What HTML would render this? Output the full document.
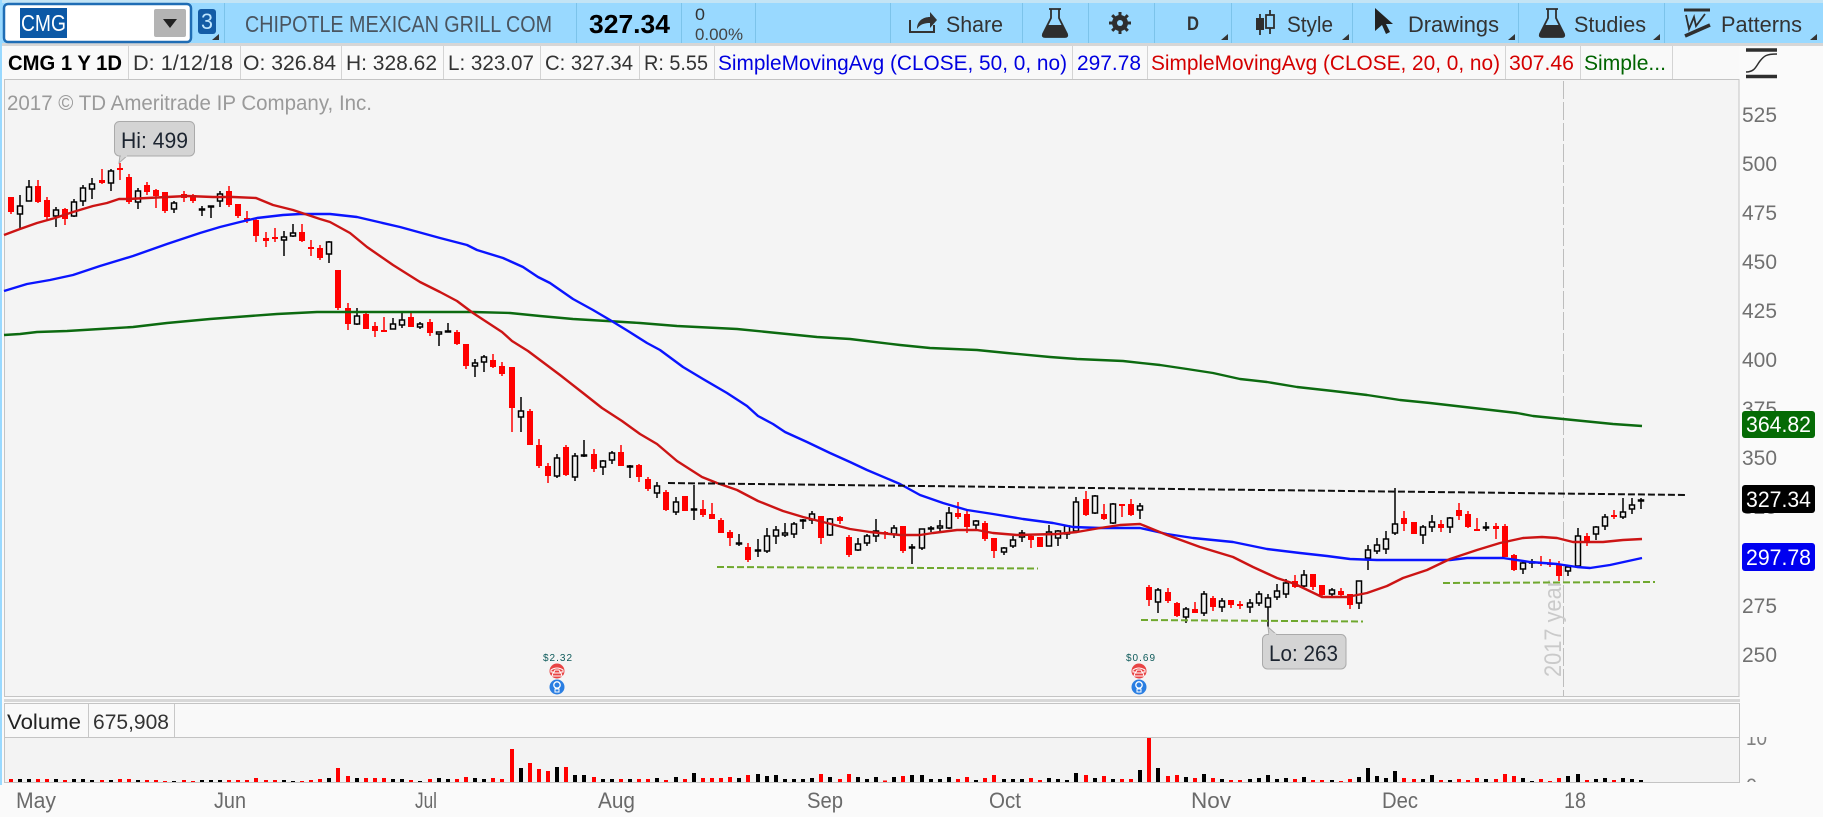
<!DOCTYPE html>
<html><head><meta charset="utf-8"><title>CMG chart</title>
<style>
html,body{margin:0;padding:0;background:#fafafa;width:1823px;height:817px;overflow:hidden}
svg{display:block}
text{font-family:"Liberation Sans",sans-serif}
</style></head><body>
<svg xmlns="http://www.w3.org/2000/svg" width="1823" height="817" viewBox="0 0 1823 817">
<defs><clipPath id="vc"><rect x="1741" y="737" width="60" height="45"/></clipPath></defs>
<rect width="1823" height="817" fill="#fafafa"/>
<!-- toolbar -->
<rect x="0" y="0" width="1823" height="3" fill="#c3e4f5"/>
<rect x="0" y="3" width="1823" height="40" fill="#99d9ff"/>
<rect x="0" y="43" width="1823" height="3" fill="#d6d6d6"/>
<rect x="0" y="0" width="2" height="785" fill="#99d9ff"/>
<path d="M224.5 3V43M576.5 3V43M681.5 3V43M755.5 3V43M890.5 3V43M1022.5 3V43M1088.5 3V43M1154.5 3V43M1231.5 3V43M1352.5 3V43M1518.5 3V43M1664.5 3V43" stroke="#7cc3ea" stroke-width="1"/>
<rect x="4" y="4" width="187" height="38" rx="4" fill="#fff" stroke="#1f6db5" stroke-width="2.5"/>
<rect x="20" y="8" width="47" height="30" fill="#0b58a6"/>
<text x="21" y="31" font-size="23" fill="#fff" textLength="45" lengthAdjust="spacingAndGlyphs">CMG</text>
<rect x="154" y="9" width="32" height="28" rx="2" fill="#b4b4b4"/>
<path d="M163 19h14l-7 9z" fill="#222"/>
<rect x="198" y="9" width="18" height="25" rx="3" fill="#145ca6"/>
<text x="201" y="29" font-size="22" fill="#bfe6ff" textLength="12" lengthAdjust="spacingAndGlyphs">3</text>
<path d="M219 34v6h-7z" fill="#333"/>
<text x="245" y="32" font-size="23" fill="#4a5560" textLength="307" lengthAdjust="spacingAndGlyphs">CHIPOTLE MEXICAN GRILL COM</text>
<text x="589" y="33" font-size="26" font-weight="700" fill="#000" textLength="81" lengthAdjust="spacingAndGlyphs">327.34</text>
<text x="695" y="20" font-size="17" fill="#333" textLength="10" lengthAdjust="spacingAndGlyphs">0</text>
<text x="695" y="40" font-size="17" fill="#444" textLength="48" lengthAdjust="spacingAndGlyphs">0.00%</text>
<!-- share -->
<path d="M910 20v12h24v-7" fill="none" stroke="#333" stroke-width="2"/>
<path d="M917 29c0-8 6-12 13-12v-5l7 8-7 8v-5c-5 0-10 1-13 6z" fill="#333"/>
<text x="946" y="32" font-size="22" fill="#333" textLength="57" lengthAdjust="spacingAndGlyphs">Share</text>
<!-- flask 1 -->
<path d="M1049 9h12M1051 9v9l-8 16q-1 3 2 3h20q3 0 2-3l-8-16v-9" fill="none" stroke="#2e2e2e" stroke-width="1.8"/>
<path d="M1047 25h16l4 9q1 3-2 3h-20q-3 0-2-3z" fill="#2e2e2e"/>
<!-- gear -->
<circle cx="1120" cy="23" r="6" fill="none" stroke="#2e2e2e" stroke-width="4"/>
<path d="M1120 12v22M1109 23h22M1112.2 15.2l15.600 15.600M1127.800 15.200l-15.600 15.600" stroke="#2e2e2e" stroke-width="3"/>
<circle cx="1120" cy="23" r="3" fill="#99d9ff"/>
<!-- D -->
<text x="1187" y="30" font-size="19" font-weight="700" fill="#333" textLength="12" lengthAdjust="spacingAndGlyphs">D</text>
<path d="M1228 34v6h-7z" fill="#333"/>
<!-- style -->
<path d="M1260 14v21M1270 10v24" stroke="#2e2e2e" stroke-width="1.800"/>
<rect x="1256" y="18" width="8" height="12" fill="#2e2e2e"/>
<rect x="1266" y="15" width="8" height="13" fill="#99d9ff" stroke="#2e2e2e" stroke-width="1.800"/>
<text x="1287" y="32" font-size="22" fill="#333" textLength="46" lengthAdjust="spacingAndGlyphs">Style</text>
<path d="M1349 34v6h-7z" fill="#333"/>
<!-- cursor -->
<path d="M1375 8L1393 24h-7l4 8-4 2-4-9-7 6z" fill="#222"/>
<text x="1408" y="32" font-size="22" fill="#333" textLength="91" lengthAdjust="spacingAndGlyphs">Drawings</text>
<path d="M1515 34v6h-7z" fill="#333"/>
<!-- flask 2 -->
<path d="M1546 9h12M1548 9v9l-8 16q-1 3 2 3h20q3 0 2-3l-8-16v-9" fill="none" stroke="#2e2e2e" stroke-width="1.800"/>
<path d="M1544 25h16l4 9q1 3-2 3h-20q-3 0-2-3z" fill="#2e2e2e"/>
<text x="1574" y="32" font-size="22" fill="#333" textLength="72" lengthAdjust="spacingAndGlyphs">Studies</text>
<path d="M1660 34v6h-7z" fill="#333"/>
<!-- patterns -->
<path d="M1684 10h26" stroke="#2e2e2e" stroke-width="3"/>
<path d="M1686 15l3 14 5-12 2 9 9-12" fill="none" stroke="#2e2e2e" stroke-width="1.800"/>
<path d="M1685 36l25-11" stroke="#2e2e2e" stroke-width="3.500"/>
<text x="1721" y="32" font-size="22" fill="#333" textLength="81" lengthAdjust="spacingAndGlyphs">Patterns</text>
<path d="M1817 34v6h-7z" fill="#333"/>

<!-- legend row -->
<rect x="4" y="46" width="1735" height="33" fill="#f9f9f9"/>
<path d="M128.500 46V79M240.500 46V79M341.500 46V79M443.500 46V79M540.500 46V79M639.500 46V79M714.500 46V79M1072.500 46V79M1147.500 46V79M1505.500 46V79M1580.500 46V79M1672.500 46V79" stroke="#d4d4d4"/>
<text x="8" y="70" font-size="21" font-weight="700" fill="#000" textLength="114" lengthAdjust="spacingAndGlyphs">CMG 1 Y 1D</text>
<g font-size="21" fill="#333">
<text x="133" y="70" textLength="100" lengthAdjust="spacingAndGlyphs">D: 1/12/18</text>
<text x="243" y="70" textLength="93" lengthAdjust="spacingAndGlyphs">O: 326.84</text>
<text x="346" y="70" textLength="91" lengthAdjust="spacingAndGlyphs">H: 328.62</text>
<text x="448" y="70" textLength="86" lengthAdjust="spacingAndGlyphs">L: 323.07</text>
<text x="545" y="70" textLength="88" lengthAdjust="spacingAndGlyphs">C: 327.34</text>
<text x="644" y="70" textLength="64" lengthAdjust="spacingAndGlyphs">R: 5.55</text>
</g>
<g font-size="21">
<text x="718" y="70" fill="#0000e0" textLength="349" lengthAdjust="spacingAndGlyphs">SimpleMovingAvg (CLOSE, 50, 0, no)</text>
<text x="1077" y="70" fill="#0000e0" textLength="64" lengthAdjust="spacingAndGlyphs">297.78</text>
<text x="1151" y="70" fill="#d40000" textLength="349" lengthAdjust="spacingAndGlyphs">SimpleMovingAvg (CLOSE, 20, 0, no)</text>
<text x="1509" y="70" fill="#d40000" textLength="65" lengthAdjust="spacingAndGlyphs">307.46</text>
<text x="1584" y="70" fill="#006400" textLength="82" lengthAdjust="spacingAndGlyphs">Simple...</text>
</g>
<!-- right curve icon -->
<path d="M1746 50h31M1746 76.500h31" stroke="#2e2e2e" stroke-width="3.500"/>
<path d="M1746 72c9 0 10-6 14-11s6-7 17-7" fill="none" stroke="#2e2e2e" stroke-width="1.500"/>

<!-- chart area -->
<rect x="4.500" y="79.500" width="1734.500" height="617" fill="#f4f4f4" stroke="#c4c4c4"/>
<path d="M1563.500 81V696" stroke="#bdbdbd" stroke-width="1" stroke-dasharray="18 3"/>
<text x="7" y="110" font-size="21" fill="#9a9a9a" textLength="365" lengthAdjust="spacingAndGlyphs">2017 © TD Ameritrade IP Company, Inc.</text>
<text transform="translate(1561 677) rotate(-90)" font-size="24" fill="#cacaca" textLength="97" lengthAdjust="spacingAndGlyphs">2017 year</text>

<!-- red wicks -->
<path fill="none" stroke="#f00" stroke-width="1.500" d="M11 197V214M38 180V203M47 197V220M65 208V225M102 169V184M120 163V180M129 174V204M147 182V195M156 189V208M165 192V213M184 191V202M193 194V203M229 186V207M238 204V218M247 211V223M256 218V242M266 232V247M275 228V242M302 224V242M311 240V256M320 245V260M338 270V310M348 303V330M366 313V329M375 322V337M384 317V331M411 312V327M430 319V336M457 330V345M466 344V369M493 354V368M502 362V376M512 367V432M530 409V445M539 439V468M548 463V483M566 445V476M594 449V472M621 445V466M639 464V482M648 477V491M666 490V511M685 496V511M703 500V517M712 503V519M721 518V533M730 530V546M748 543V562M821 516V544M840 516V524M849 535V557M885 531V539M903 526V553M958 502V519M967 509V533M985 521V541M994 538V558M1031 535V548M1040 537V547M1086 491V516M1104 504V520M1122 504V517M1131 499V516M1149 585V606M1168 588V603M1177 602V617M1195 602V613M1213 596V611M1231 600V608M1240 601V609M1295 575V588M1313 574V590M1322 585V597M1341 588V597M1350 594V609M1404 511V531M1414 522V534M1441 520V532M1459 503V520M1468 511V528M1477 518V531M1496 523V539M1505 524V557M1514 554V571M1541 556V566M1550 559V567M1559 561V581M1587 533V546M1614 510V519"/>
<!-- red bodies -->
<path fill="none" stroke="#f00" stroke-width="6" d="M11 197V212M38 186V202M47 200V217M65 209V219M102 180V183M120 168V170M129 177V202M147 185V192M156 190V196M165 192V211M184 194V198M193 195V201M229 191V205M238 204V216M247 218V220M256 220V236M266 238V241M275 237V239M302 232V241M311 247V249M320 248V258M338 270V308M348 308V324M366 314V329M375 326V331M384 330V332M411 317V327M430 322V333M457 332V344M466 344V366M493 360V367M502 366V374M512 367V408M530 411V445M539 445V466M548 466V476M566 447V475M594 454V469M621 452V466M639 465V477M648 479V489M666 492V510M685 496V511M703 509V515M712 514V519M721 520V533M730 532V538M748 547V560M821 516V538M840 517V521M849 537V555M885 532V534M903 526V551M958 513V517M967 514V527M985 523V539M994 538V551M1031 536V540M1040 537V547M1086 499V515M1104 514V519M1122 504V506M1131 504V515M1149 587V600M1168 592V601M1177 603V616M1195 609V613M1213 598V607M1231 600V605M1240 604V606M1295 581V587M1313 574V587M1322 585V595M1341 591V595M1350 594V605M1404 518V524M1414 522V534M1441 524V528M1459 510V516M1468 514V527M1477 529V531M1496 526V529M1505 526V557M1514 555V570M1541 562V564M1550 563V565M1559 564V576M1587 536V541M1614 515V517"/>
<!-- black wicks -->
<path fill="none" stroke="#000" stroke-width="1.500" d="M20 195V229M29 180V201M56 207V227M74 199V217M83 185V206M92 178V199M111 169V191M138 188V209M174 201V213M202 206V216M211 206V218M220 191V207M284 231V256M293 224V237M329 241V263M357 308V325M393 318V329M402 313V328M420 322V329M439 332V346M448 323V332M475 359V377M484 355V372M521 397V432M557 454V478M575 453V481M584 440V457M603 460V475M612 451V464M630 465V478M657 482V498M676 497V515M694 485V520M739 534V546M758 539V557M767 528V553M776 526V544M785 523V537M794 522V538M803 519V529M812 511V524M830 518V536M858 538V551M867 534V546M876 519V542M894 525V538M912 544V564M922 529V550M931 526V532M940 520V531M949 507V529M976 520V529M1004 547V555M1013 536V548M1022 530V542M1049 525V546M1058 530V546M1067 526V539M1076 497V532M1095 495V514M1113 503V524M1140 503V519M1158 588V613M1186 607V623M1204 591V616M1222 598V612M1250 599V613M1259 591V606M1268 594V627M1277 584V600M1286 579V598M1304 570V587M1332 588V596M1359 581V609M1368 545V570M1377 538V554M1386 531V554M1395 488V535M1423 525V544M1432 515V532M1450 517V533M1486 522V531M1523 561V574M1532 559V568M1568 566V576M1578 528V566M1596 526V540M1605 514V530M1623 498V519M1632 498V514M1641 498V509"/>
<!-- hollow bodies -->
<path fill="#f4f4f4" stroke="#000" stroke-width="1.500" d="M17.500 206h5v8h-5zM26.500 187h5v14h-5zM53.500 210h5v6h-5zM71.500 202h5v14h-5zM80.500 188h5v13h-5zM89.500 184h5v5h-5zM108.500 171h5v12h-5zM135.500 191h5v11h-5zM171.500 203h5v6h-5zM199.500 209h5v1h-5zM208.500 206h5v1h-5zM217.500 194h5v7h-5zM281.500 237h5v3h-5zM290.500 233h5v3h-5zM326.500 242h5v12h-5zM354.500 316h5v8h-5zM390.500 324h5v5h-5zM399.500 320h5v5h-5zM417.500 324h5v3h-5zM436.500 332h5v2h-5zM445.500 331h5v1h-5zM472.500 363h5v3h-5zM481.500 357h5v5h-5zM518.500 411h5v6h-5zM554.500 458h5v18h-5zM572.500 456h5v21h-5zM581.500 455h5v1h-5zM600.500 461h5v6h-5zM609.500 453h5v7h-5zM627.500 466h5v1h-5zM654.500 486h5v7h-5zM673.500 502h5v10h-5zM691.500 509h5v1h-5zM736.500 543h5v1h-5zM755.500 550h5v1h-5zM764.500 536h5v15h-5zM773.500 530h5v6h-5zM782.500 533h5v2h-5zM791.500 524h5v10h-5zM800.500 520h5v1h-5zM809.500 514h5v6h-5zM827.500 519h5v16h-5zM855.500 544h5v6h-5zM864.500 536h5v7h-5zM873.500 531h5v5h-5zM891.500 528h5v6h-5zM909.500 547h5v1h-5zM919.500 529h5v19h-5zM928.500 528h5v1h-5zM937.500 526h5v2h-5zM946.500 513h5v15h-5zM973.500 521h5v4h-5zM1001.500 548h5v4h-5zM1010.500 540h5v6h-5zM1019.500 533h5v4h-5zM1046.500 532h5v14h-5zM1055.500 531h5v7h-5zM1064.500 526h5v8h-5zM1073.500 502h5v29h-5zM1092.500 496h5v17h-5zM1110.500 504h5v19h-5zM1137.500 506h5v4h-5zM1155.500 590h5v12h-5zM1183.500 609h5v8h-5zM1201.500 594h5v19h-5zM1219.500 601h5v6h-5zM1247.500 603h5v4h-5zM1256.500 594h5v9h-5zM1265.500 598h5v9h-5zM1274.500 591h5v6h-5zM1283.500 583h5v11h-5zM1301.500 575h5v11h-5zM1329.500 590h5v4h-5zM1356.500 581h5v22h-5zM1365.500 550h5v8h-5zM1374.500 545h5v6h-5zM1383.500 539h5v10h-5zM1392.500 524h5v9h-5zM1420.500 527h5v8h-5zM1429.500 522h5v5h-5zM1447.500 518h5v9h-5zM1483.500 527h5v1h-5zM1520.500 563h5v6h-5zM1529.500 562h5v1h-5zM1565.500 567h5v4h-5zM1575.500 536h5v30h-5zM1593.500 527h5v7h-5zM1602.500 517h5v9h-5zM1620.500 512h5v5h-5zM1629.500 505h5v4h-5zM1638.500 500h5v1h-5z"/>

<!-- moving averages -->
<polyline fill="none" stroke="#0c6a10" stroke-width="2.400" stroke-linejoin="round" points="4,335 20,334 37,332 67,331 100,329 133,327 167,323 210,319 250,316 277,314 317,312 367,312 450,312 473,312 510,313 540,316 573,319 607,321 640,323 677,326 737,329 767,332 817,337 850,339 900,345 930,348 977,350 1007,353 1050,357 1077,359 1123,361 1160,365 1187,369 1213,373 1240,379 1267,382 1297,387 1333,391 1367,395 1400,400 1430,403 1517,413 1533,416 1563,419 1613,424 1642,426"/>
<polyline fill="none" stroke="#0a14ff" stroke-width="2.400" stroke-linejoin="round" points="4,291 27,284 50,280 73,275 100,266 133,256 167,244 200,233 220,227 240,222 257,218 283,215 300,214 330,214 357,217 400,227 440,238 467,245 477,250 503,258 523,267 538,277 550,283 573,299 593,310 610,320 628,331 647,343 660,350 683,367 703,379 727,393 747,406 758,416 773,424 785,432 807,442 830,453 850,462 867,470 900,484 920,495 943,503 967,510 993,514 1023,519 1053,523 1073,527 1100,528 1140,528 1167,534 1193,538 1233,542 1267,549 1300,553 1327,556 1350,559 1377,560 1450,560 1467,558 1503,558 1530,562 1557,564 1577,567 1590,568 1610,565 1642,558"/>
<polyline fill="none" stroke="#cc1414" stroke-width="2.400" stroke-linejoin="round" points="4,235 20,229 37,223 55,218 73,212 93,206 107,203 119,199 128,199 147,198 167,197 187,196 213,197 233,197 256,198 273,205 293,210 320,219 330,222 350,233 367,247 393,265 420,282 440,292 457,301 473,313 502,332 512,341 528,351 548,366 560,375 583,393 602,408 622,421 640,434 657,444 677,461 702,477 717,483 737,490 758,501 783,511 803,517 827,523 850,529 870,532 900,535 920,535 933,533 957,530 977,530 993,533 1017,535 1057,534 1077,532 1100,528 1120,525 1140,524 1167,535 1200,547 1233,557 1253,567 1277,578 1295,584 1322,597 1347,597 1367,593 1387,586 1403,578 1427,570 1450,559 1477,550 1500,543 1523,538 1542,537 1557,538 1573,542 1603,542 1623,540 1642,539"/>
<!-- dashed lines -->
<path d="M668 483L1686 495" stroke="#111" stroke-width="2" stroke-dasharray="7 3" fill="none"/>
<path d="M717 567L1038 568.500M1141 620L1363 621.500M1443 583L1655 582" stroke="#6fa82e" stroke-width="2" stroke-dasharray="7 3" fill="none"/>

<!-- callouts -->
<path d="M120 155l-1 8 9-8z" fill="#d4d4d4" stroke="#aaa"/>
<rect x="114.500" y="121.500" width="80" height="34.500" rx="5" fill="#d4d4d4" stroke="#aaa"/>
<path d="M121 154h6v3h-6z" fill="#d4d4d4"/>
<text x="121" y="148" font-size="22" fill="#1c2430" textLength="67" lengthAdjust="spacingAndGlyphs">Hi: 499</text>
<path d="M1268 627l1 8h8z" fill="#d4d4d4" stroke="#aaa"/>
<rect x="1262.500" y="634.500" width="83.500" height="34.500" rx="5" fill="#d4d4d4" stroke="#aaa"/>
<path d="M1269 633h7v3h-7z" fill="#d4d4d4"/>
<text x="1269" y="661" font-size="22" fill="#1c2430" textLength="69" lengthAdjust="spacingAndGlyphs">Lo: 263</text>

<!-- dividends/earnings markers -->
<text x="543" y="661" font-family="Liberation Mono,monospace" font-size="10" fill="#0d5a5a" textLength="29">$2.32</text>
<circle cx="557" cy="671" r="7.500" fill="#e84444"/>
<path d="M551 670q6-4 12 0v2h-3l-1-2h-4l-1 2h-3zM553 673h8l1 3h-10z" fill="none" stroke="#fff" stroke-width="1"/>
<circle cx="557" cy="687" r="7.500" fill="#2a7ee2"/>
<circle cx="557" cy="685" r="3.200" fill="none" stroke="#fff" stroke-width="1.300"/>
<path d="M555 689h4v3h-4z" fill="none" stroke="#fff" stroke-width="1"/>
<text x="1126" y="661" font-family="Liberation Mono,monospace" font-size="10" fill="#0d5a5a" textLength="29">$0.69</text>
<circle cx="1139" cy="671" r="7.500" fill="#e84444"/>
<path d="M1133 670q6-4 12 0v2h-3l-1-2h-4l-1 2h-3zM1135 673h8l1 3h-10z" fill="none" stroke="#fff" stroke-width="1"/>
<circle cx="1139" cy="687" r="7.500" fill="#2a7ee2"/>
<circle cx="1139" cy="685" r="3.200" fill="none" stroke="#fff" stroke-width="1.300"/>
<path d="M1137 689h4v3h-4z" fill="none" stroke="#fff" stroke-width="1"/>

<!-- y axis -->
<g font-size="21" fill="#707070">
<text x="1742" y="122" textLength="35" lengthAdjust="spacingAndGlyphs">525</text>
<text x="1742" y="171" textLength="35" lengthAdjust="spacingAndGlyphs">500</text>
<text x="1742" y="220" textLength="35" lengthAdjust="spacingAndGlyphs">475</text>
<text x="1742" y="269" textLength="35" lengthAdjust="spacingAndGlyphs">450</text>
<text x="1742" y="318" textLength="35" lengthAdjust="spacingAndGlyphs">425</text>
<text x="1742" y="367" textLength="35" lengthAdjust="spacingAndGlyphs">400</text>
<text x="1742" y="416" textLength="35" lengthAdjust="spacingAndGlyphs">375</text>
<text x="1742" y="465" textLength="35" lengthAdjust="spacingAndGlyphs">350</text>
<text x="1742" y="514" textLength="35" lengthAdjust="spacingAndGlyphs">325</text>
<text x="1742" y="563" textLength="35" lengthAdjust="spacingAndGlyphs">300</text>
<text x="1742" y="613" textLength="35" lengthAdjust="spacingAndGlyphs">275</text>
<text x="1742" y="662" textLength="35" lengthAdjust="spacingAndGlyphs">250</text>
</g>
<rect x="1742" y="411" width="73" height="27" rx="3" fill="#056b05"/>
<rect x="1742" y="485" width="73" height="28" rx="3" fill="#000"/>
<rect x="1742" y="543" width="73" height="28" rx="3" fill="#0000f0"/>
<g font-size="22" fill="#fff">
<text x="1746" y="432" textLength="65" lengthAdjust="spacingAndGlyphs">364.82</text>
<text x="1746" y="507" textLength="65" lengthAdjust="spacingAndGlyphs">327.34</text>
<text x="1746" y="565" textLength="65" lengthAdjust="spacingAndGlyphs">297.78</text>
</g>

<!-- panel divider -->
<rect x="4" y="699" width="1736" height="3" fill="#d8d8d8"/>
<!-- volume panel -->
<rect x="4.500" y="703.500" width="1735" height="78.500" fill="#f9f9f9" stroke="#c4c4c4"/>
<rect x="5" y="738" width="1734" height="44" fill="#f3f3f3"/>
<path d="M4 737.500H1740" stroke="#c4c4c4"/>
<path d="M88.500 704V737M174.500 704V737" stroke="#c8c8c8"/>
<text x="7" y="729" font-size="21" fill="#222" textLength="74" lengthAdjust="spacingAndGlyphs">Volume</text>
<text x="93" y="729" font-size="21" fill="#333" textLength="76" lengthAdjust="spacingAndGlyphs">675,908</text>
<!-- volume bars -->
<path fill="none" stroke="#f00" stroke-width="4" d="M11 782v-3M38 782v-3M47 782v-3M65 782v-2M102 782v-2M120 782v-3M129 782v-3M147 782v-2M156 782v-2M165 782v-1M184 782v-2M193 782v-1M229 782v-2M238 782v-2M247 782v-2M256 782v-4M266 782v-2M275 782v-2M302 782v-1M311 782v-2M320 782v-3M338 782v-14M348 782v-6M366 782v-4M375 782v-4M384 782v-4M411 782v-2M430 782v-3M457 782v-3M466 782v-5M493 782v-4M502 782v-3M512 782v-33M530 782v-19M539 782v-13M548 782v-11M566 782v-15M594 782v-5M621 782v-3M639 782v-3M648 782v-3M666 782v-2M685 782v-3M703 782v-4M712 782v-4M721 782v-4M730 782v-5M748 782v-7M821 782v-8M840 782v-3M849 782v-8M885 782v-1.500M903 782v-6M958 782v-3M967 782v-5M985 782v-4M994 782v-7M1031 782v-4M1040 782v-2M1086 782v-7M1104 782v-6M1122 782v-3M1131 782v-3M1149 782v-44M1168 782v-6M1177 782v-7M1195 782v-4M1213 782v-4M1231 782v-2M1240 782v-2M1295 782v-3M1313 782v-2M1322 782v-2M1341 782v-1M1350 782v-3M1404 782v-4M1414 782v-3M1441 782v-2M1459 782v-3M1468 782v-2M1477 782v-4M1496 782v-3M1505 782v-8M1514 782v-6M1541 782v-3M1550 782v-1M1559 782v-4M1587 782v-2M1614 782v-2"/>
<path fill="none" stroke="#000" stroke-width="4" d="M20 782v-3M29 782v-3M56 782v-3M74 782v-3M83 782v-3M92 782v-2M111 782v-2M138 782v-2M174 782v-1M202 782v-2M211 782v-2M220 782v-2M284 782v-2M293 782v-1M329 782v-4M357 782v-4M393 782v-3M402 782v-3M420 782v-1M439 782v-4M448 782v-3M475 782v-4M484 782v-3M521 782v-14M557 782v-15M575 782v-7M584 782v-7M603 782v-3M612 782v-3M630 782v-3M657 782v-4M676 782v-5M694 782v-9M739 782v-4M758 782v-8M767 782v-6M776 782v-7M785 782v-3M794 782v-3M803 782v-3M812 782v-4M830 782v-5M858 782v-5M867 782v-3M876 782v-5M894 782v-5M912 782v-7M922 782v-7M931 782v-3M940 782v-3M949 782v-5M976 782v-2M1004 782v-3M1013 782v-3M1022 782v-3M1049 782v-4M1058 782v-3M1067 782v-2M1076 782v-9M1095 782v-4M1113 782v-3M1140 782v-12M1158 782v-14M1186 782v-5M1204 782v-8M1222 782v-3M1250 782v-3M1259 782v-4M1268 782v-7M1277 782v-3M1286 782v-4M1304 782v-5M1332 782v-2M1359 782v-5M1368 782v-14M1377 782v-6M1386 782v-4M1395 782v-11M1423 782v-3M1432 782v-7M1450 782v-2M1486 782v-3M1523 782v-4M1532 782v-1M1568 782v-6M1578 782v-8M1596 782v-3M1605 782v-4M1623 782v-4M1632 782v-3M1641 782v-2"/>
<path d="M4 782.500H1740" stroke="#c4c4c4"/>
<g clip-path="url(#vc)" font-size="21" fill="#808080">
<text x="1746" y="745" textLength="21" lengthAdjust="spacingAndGlyphs">10</text>
<text x="1746" y="793" textLength="11" lengthAdjust="spacingAndGlyphs">0</text>
</g>
<!-- months -->
<g font-size="22" fill="#6a6a6a">
<text x="16" y="808" textLength="40" lengthAdjust="spacingAndGlyphs">May</text>
<text x="214" y="808" textLength="32" lengthAdjust="spacingAndGlyphs">Jun</text>
<text x="415" y="808" textLength="22" lengthAdjust="spacingAndGlyphs">Jul</text>
<text x="598" y="808" textLength="37" lengthAdjust="spacingAndGlyphs">Aug</text>
<text x="807" y="808" textLength="36" lengthAdjust="spacingAndGlyphs">Sep</text>
<text x="989" y="808" textLength="32" lengthAdjust="spacingAndGlyphs">Oct</text>
<text x="1191" y="808" textLength="40" lengthAdjust="spacingAndGlyphs">Nov</text>
<text x="1382" y="808" textLength="36" lengthAdjust="spacingAndGlyphs">Dec</text>
<text x="1564" y="808" textLength="22" lengthAdjust="spacingAndGlyphs">18</text>
</g>
</svg>
</body></html>
